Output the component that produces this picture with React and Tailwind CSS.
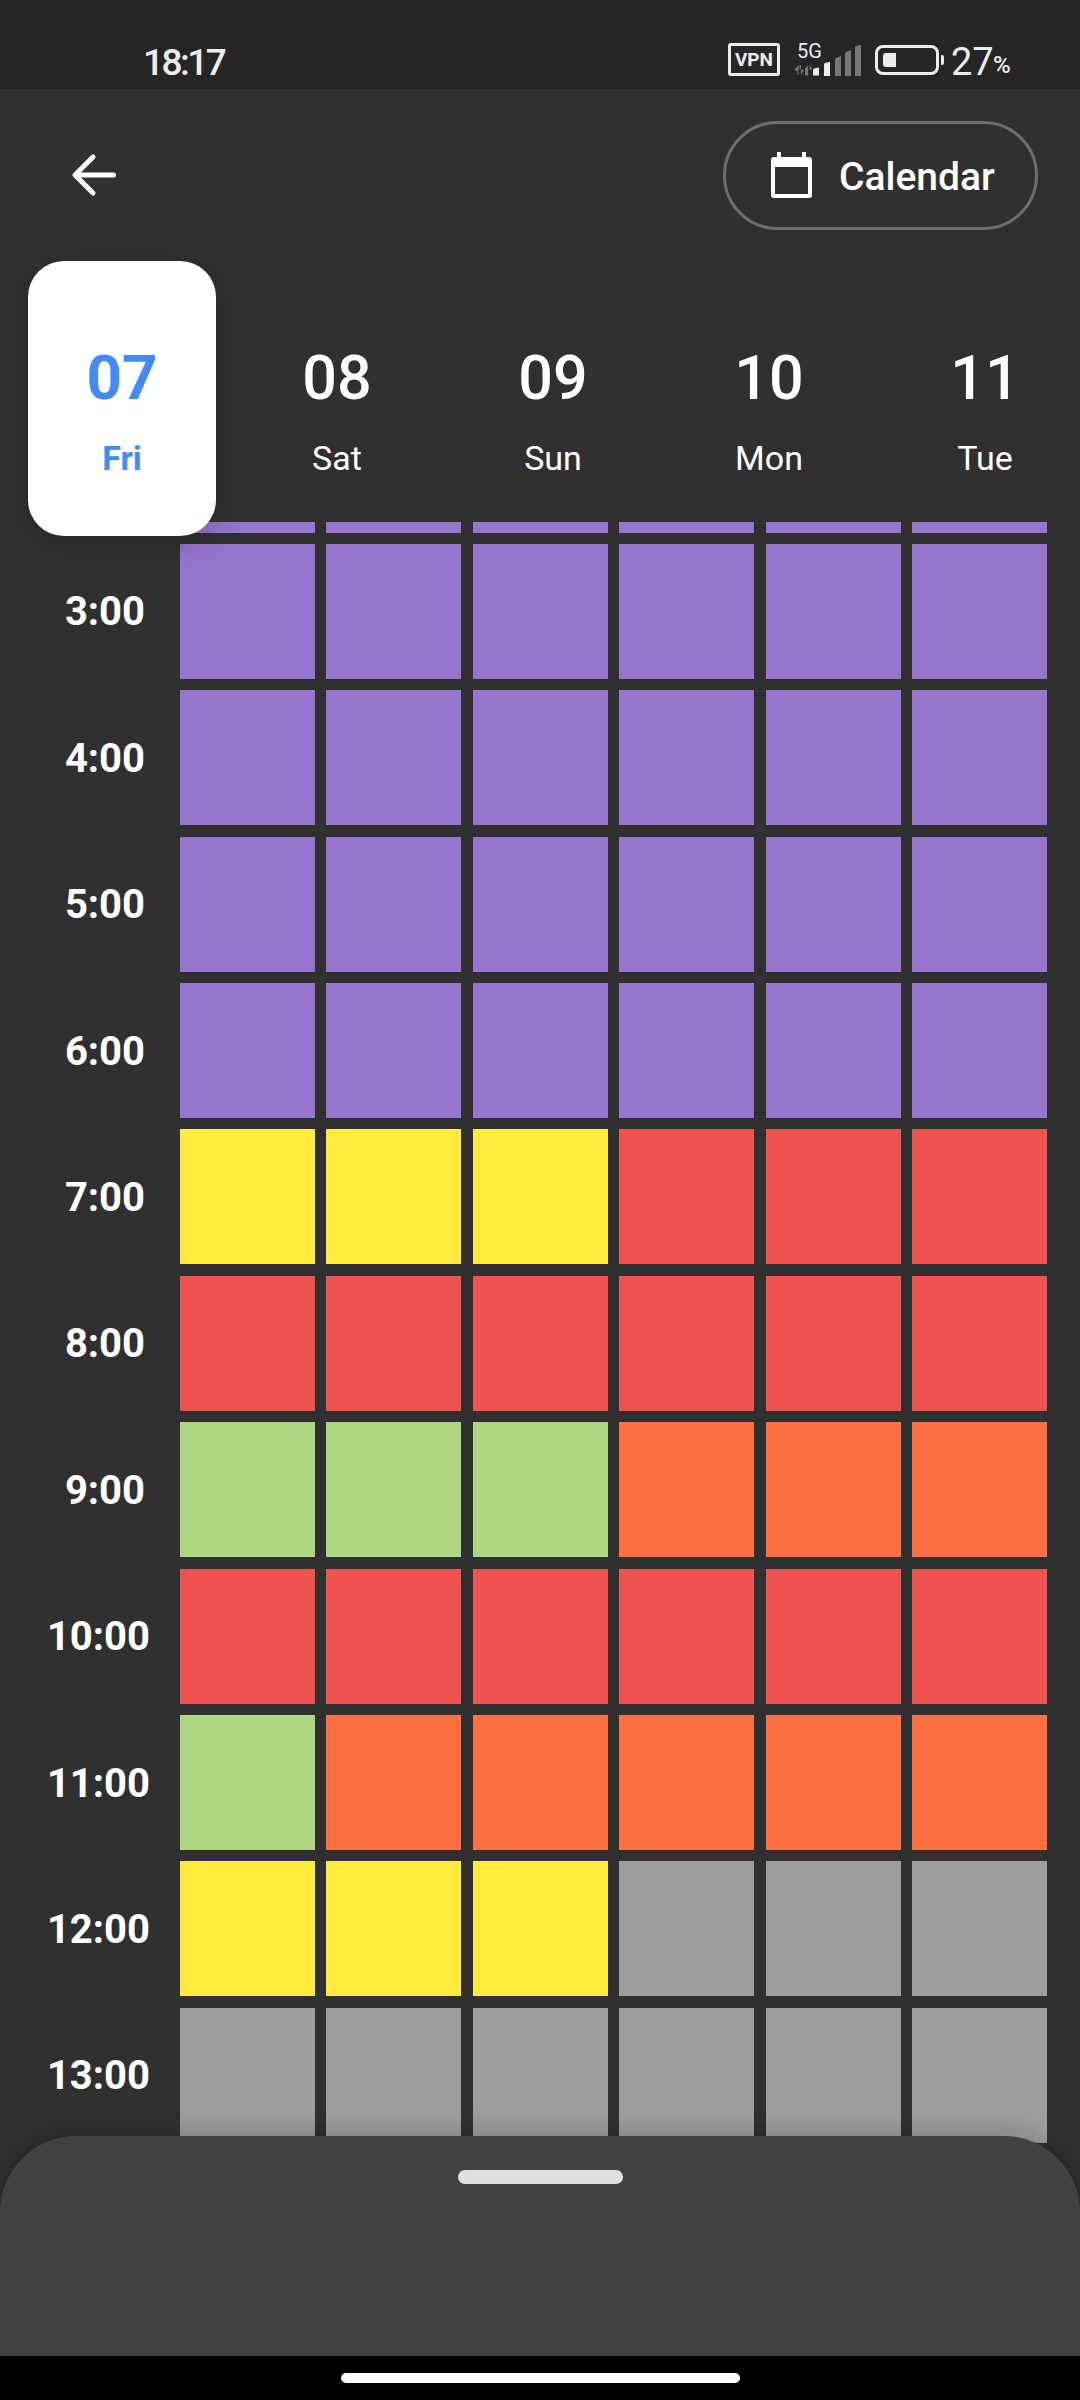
import React from 'react';

const P = 'bg-[#9575cd]', Y = 'bg-[#ffeb3b]', R = 'bg-[#ef5350]', G = 'bg-[#aed581]', O = 'bg-[#ff7043]', A = 'bg-[#9e9e9e]';

const rows = [
  ['3:00', [P, P, P, P, P, P]],
  ['4:00', [P, P, P, P, P, P]],
  ['5:00', [P, P, P, P, P, P]],
  ['6:00', [P, P, P, P, P, P]],
  ['7:00', [Y, Y, Y, R, R, R]],
  ['8:00', [R, R, R, R, R, R]],
  ['9:00', [G, G, G, O, O, O]],
  ['10:00', [R, R, R, R, R, R]],
  ['11:00', [G, O, O, O, O, O]],
  ['12:00', [Y, Y, Y, A, A, A]],
  ['13:00', [A, A, A, A, A, A]],
];

const days = [
  ['07', 'Fri', true],
  ['08', 'Sat'],
  ['09', 'Sun'],
  ['10', 'Mon'],
  ['11', 'Tue'],
];

function Signal() {
  return (
    <svg width="68" height="32" viewBox="0 0 68 32" className="absolute left-[794px] top-[45px]">
      <path d="M0 25l4.500-5v10h-1V26zM5.500 20h1.500v10l3-5-4.500-1z" fill="#777" />
      <path d="M11 23.500l3-3v10h-3zM15.500 20l3 4-3 1v6z" fill="#777" />
      <path d="M19 25.500q0-2 2-2.300l4-.7v8h-6z" fill="#ededed" />
      <path d="M30 20q0-2 1.500-2.300l4.500-.7v14h-6z" fill="#ededed" />
      <path d="M41 15q0-2 1.500-2.300l4.500-1.700v20h-6z" fill="#777" />
      <path d="M51 9q0-2 1.500-2.300l4.500-1.700v26h-6z" fill="#777" />
      <path d="M61 3q0-2 1.500-2.300l4.500-.7v31h-6z" fill="#777" />
    </svg>
  );
}

function StatusBar() {
  return (
    <div className="relative h-[89px] shrink-0 bg-[#262626] text-[#ededed]">
      <span className="absolute left-[143px] top-[41px] text-[37px] leading-[43px] tracking-[-2.500px] font-medium">18:17</span>
      <div className="absolute left-[728px] top-[43px] flex h-[33px] w-[52px] items-center justify-center rounded-[3px] border-[3.500px] border-[#ededed]">
        <span className="text-[19px] leading-none font-bold">VPN</span>
      </div>
      <span className="absolute left-[797px] top-[40px] text-[20px] leading-[22px]">5G</span>
      <Signal />
      <div className="absolute left-[875px] top-[45px] h-[30px] w-[64px] rounded-[8px] border-[3px] border-[#ededed] p-[5px]">
        <div className="h-full w-[13px] rounded-l-[3px] bg-[#ededed]" />
      </div>
      <div className="absolute left-[941px] top-[55px] h-[10px] w-[3px] rounded-r-[2px] bg-[#ededed]" />
      <span className="absolute left-[951px] top-[41px] text-[38px] leading-[43px]">27</span>
      <span className="absolute left-[993px] top-[52px] text-[24px] leading-[27px] font-medium">%</span>
    </div>
  );
}

function Header() {
  return (
    <div className="flex h-[172px] shrink-0 items-center justify-between pl-[70px] pr-[42px]">
      <svg width="48" height="48" viewBox="0 0 48 48" fill="none" stroke="#fff" strokeWidth="5" strokeLinecap="round" strokeLinejoin="round">
        <path d="M43.500 24H6M23 6 5 24 23 42" />
      </svg>
      <div className="flex h-[109px] w-[315px] items-center rounded-full border-[3px] border-[#6e6e6e] pl-[45px]">
        <svg width="41" height="46" viewBox="0 0 41 46" fill="#fff" fillRule="evenodd">
          <path d="M6 0h4v5h21V0h4v5h3a3 3 0 0 1 3 3v35a3 3 0 0 1-3 3H3a3 3 0 0 1-3-3V8a3 3 0 0 1 3-3h3zM4 15v27h33V15z" />
        </svg>
        <span className="ml-[27px] pt-[3px] text-[39px] leading-[44px] font-medium text-white">Calendar</span>
      </div>
    </div>
  );
}

function Days() {
  return (
    <div className="flex h-[275px] shrink-0 gap-[28px] pl-[28px]">
      {days.map(([n, d, sel]) => (
        <div
          key={n}
          className={
            sel
              ? 'relative z-10 flex w-[188px] flex-col items-center rounded-[36px] bg-white pt-[83px] text-[#448aff] shadow-[0_6px_30px_rgba(0,0,0,0.2)]'
              : 'flex w-[188px] -translate-x-[1px] flex-col items-center pt-[83px] text-white'
          }
        >
          <span className={sel ? 'text-[62px] leading-[68px] font-bold' : 'text-[61px] leading-[68px] font-medium'}>{n}</span>
          <span className={sel ? 'mt-[26px] text-[34px] leading-[40px] font-bold' : 'mt-[26px] text-[34px] leading-[40px] font-normal'}>{d}</span>
        </div>
      ))}
    </div>
  );
}

function Schedule() {
  return (
    <div className="-mt-[14px] flex shrink-0 flex-col gap-[11.400px]">
      <div className="flex h-[10.500px] gap-[11.400px] pl-[180px]">
        {[0, 1, 2, 3, 4, 5].map((i) => (
          <div key={i} className={`h-full w-[135px] ${P}`} />
        ))}
      </div>
      {rows.map(([t, cells]) => (
        <div key={t} className="flex h-[135px] items-center">
          <div
            className={
              t.length > 4
                ? 'w-[180px] shrink-0 pr-[30px] pt-[2px] text-right text-[40px] leading-[46px] font-bold text-white'
                : 'w-[180px] shrink-0 pr-[35px] pt-[2px] text-right text-[40px] leading-[46px] font-bold text-white'
            }
          >
            {t}
          </div>
          <div className="flex h-full gap-[11.400px]">
            {cells.map((c, i) => (
              <div key={i} className={`h-full w-[135px] ${c}`} />
            ))}
          </div>
        </div>
      ))}
    </div>
  );
}

export default function App() {
  return (
    <div className="flex h-[2400px] w-[1080px] flex-col overflow-hidden bg-[#303030] font-['Roboto',sans-serif]">
      <StatusBar />
      <Header />
      <Days />
      <Schedule />
      <div className="relative -mt-[7px] flex h-[220px] shrink-0 justify-center rounded-t-[76px] bg-[#424242] pt-[34px] shadow-[0_-4px_24px_rgba(0,0,0,0.2)]">
        <div className="h-[14px] w-[165px] rounded-full bg-[#e0e0e0]" />
      </div>
      <div className="relative flex h-[44px] shrink-0 justify-center bg-black pt-[17px]">
        <div className="h-[10px] w-[399px] rounded-full bg-white" />
      </div>
    </div>
  );
}
